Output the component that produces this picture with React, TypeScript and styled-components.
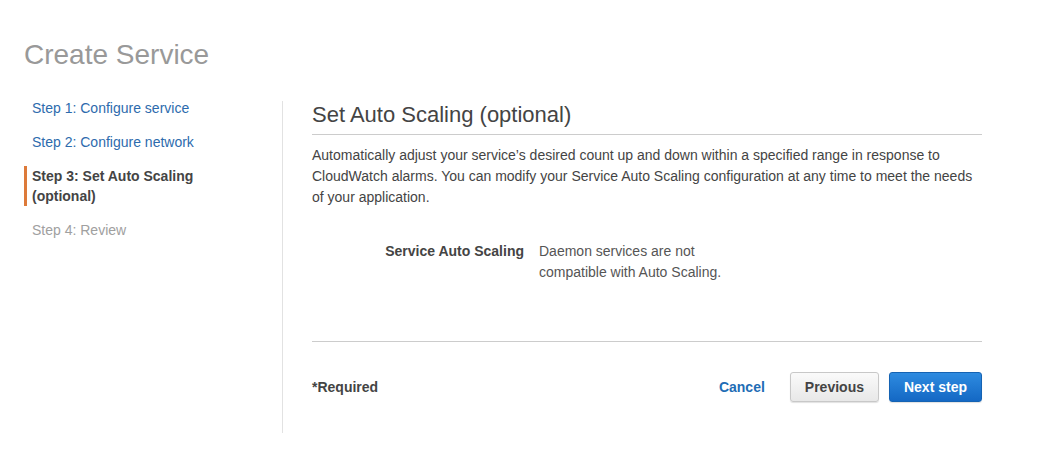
import React from "react";
import styled, { createGlobalStyle } from "styled-components";

const Global = createGlobalStyle`
  html, body { margin: 0; padding: 0; background: #fff; }
  body { font-family: "Liberation Sans", Arial, sans-serif; color: #444; }
  * { box-sizing: border-box; }
`;

const Page = styled.div`
  padding: 35px 0 0 24px;
  width: 1056px;
`;

const Title = styled.h1`
  margin: 0;
  font-size: 28px;
  line-height: 40px;
  font-weight: normal;
  color: #999;
`;

const Layout = styled.div`
  display: flex;
  margin-top: 23px;
`;

const Sidebar = styled.ul`
  list-style: none;
  margin: 0;
  padding: 0;
  width: 258px;
  flex: none;
`;

const StepItem = styled.li<{ $state: "link" | "active" | "disabled" }>`
  font-size: 14px;
  line-height: 20px;
  margin-bottom: 14px;
  border-left: 3px solid ${(p) => (p.$state === "active" ? "#dd7a3a" : "transparent")};
  padding-left: 5px;
  width: 200px;
  font-weight: ${(p) => (p.$state === "active" ? "bold" : "normal")};
  color: ${(p) =>
    p.$state === "link" ? "#2d6bad" : p.$state === "active" ? "#444" : "#a0a0a0"};
`;

const Main = styled.div`
  border-left: 1px solid #e2e2e2;
  padding: 0 0 0 29px;
  height: 332px;
  margin-top: 3px;
`;

const Content = styled.div`
  width: 670px;
`;

const Heading = styled.h2`
  margin: 0;
  font-size: 22px;
  line-height: 28px;
  font-weight: normal;
  color: #444;
  padding-bottom: 5px;
  border-bottom: 1px solid #ccc;
`;

const Paragraph = styled.p`
  margin: 10px 0 0;
  font-size: 14px;
  line-height: 21px;
  color: #444;
`;

const FieldRow = styled.div`
  display: grid;
  grid-template-columns: 212px 200px;
  column-gap: 15px;
  margin-top: 33px;
  font-size: 14px;
  line-height: 21px;
`;

const FieldLabel = styled.div`
  text-align: right;
  font-weight: bold;
  color: #444;
`;

const FieldValue = styled.div`
  color: #555;
`;

const Divider = styled.hr`
  border: 0;
  border-top: 1px solid #ccc;
  margin: 58px 0 0;
`;

const Footer = styled.div`
  display: flex;
  align-items: center;
  margin-top: 30px;
`;

const Required = styled.span`
  font-size: 14px;
  font-weight: bold;
  color: #444;
  flex: 1;
`;

const LinkButton = styled.button`
  background: none;
  border: 0;
  padding: 0;
  margin-right: 15px;
  font: bold 14px "Liberation Sans", Arial, sans-serif;
  color: #1f6db5;
  cursor: pointer;
`;

const Button = styled.button<{ $primary?: boolean }>`
  height: 30px;
  padding: 0 14px;
  border-radius: 3px;
  font: bold 14px "Liberation Sans", Arial, sans-serif;
  cursor: pointer;
  margin-left: 10px;
  border: 1px solid ${(p) => (p.$primary ? "#1563b3" : "#c8c8c8")};
  color: ${(p) => (p.$primary ? "#fff" : "#444")};
  background: ${(p) =>
    p.$primary
      ? "linear-gradient(#2e8be0, #1468c4)"
      : "linear-gradient(#fafafa, #e8e8e8)"};
  box-shadow: 0 1px 1px rgba(0, 0, 0, 0.12);
`;

export default function App() {
  return (
    <>
      <Global />
      <Page>
        <Title>Create Service</Title>
        <Layout>
          <Sidebar>
            <StepItem $state="link">Step 1: Configure service</StepItem>
            <StepItem $state="link">Step 2: Configure network</StepItem>
            <StepItem $state="active">Step 3: Set Auto Scaling (optional)</StepItem>
            <StepItem $state="disabled">Step 4: Review</StepItem>
          </Sidebar>
          <Main>
            <Content>
              <Heading>Set Auto Scaling (optional)</Heading>
              <Paragraph>
                Automatically adjust your service’s desired count up and down within a specified
                range in response to CloudWatch alarms. You can modify your Service Auto Scaling
                configuration at any time to meet the needs of your application.
              </Paragraph>
              <FieldRow>
                <FieldLabel>Service Auto Scaling</FieldLabel>
                <FieldValue>Daemon services are not compatible with Auto Scaling.</FieldValue>
              </FieldRow>
              <Divider />
              <Footer>
                <Required>*Required</Required>
                <LinkButton>Cancel</LinkButton>
                <Button>Previous</Button>
                <Button $primary>Next step</Button>
              </Footer>
            </Content>
          </Main>
        </Layout>
      </Page>
    </>
  );
}
